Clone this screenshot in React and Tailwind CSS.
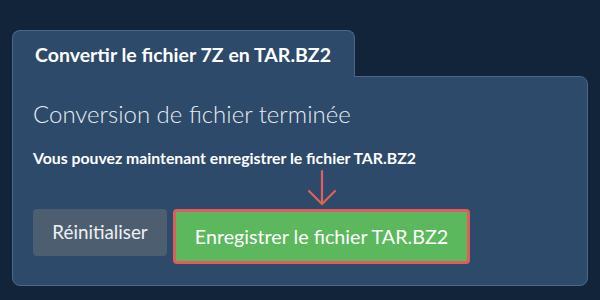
import React from "react";

export default function App() {
  return (
    <div
      className="w-[600px] h-[300px] bg-[#12243a] pt-[30px] pl-[12px] overflow-hidden"
      style={{ fontFamily: "Lato, 'Open Sans', sans-serif" }}
    >
      <div className="relative z-10 w-[343px] h-[47px] mb-[-1px] bg-[#2d4a6a] border border-b-0 border-[#4a6888] rounded-t-[8px] flex items-center pl-[22px]">
        <span className="text-white font-bold text-[19.5px] leading-none pt-[2px]">
          Convertir le fichier 7Z en TAR.BZ2
        </span>
      </div>
      <div className="w-[576px] h-[210px] bg-[#2d4a6a] border border-[#4a6888] rounded-b-[8px] rounded-tr-[8px] pl-[20px] pt-[22px]">
        <h1 className="text-[#e8edf2] font-light text-[24px] leading-[30px]">
          Conversion de fichier terminée
        </h1>
        <p className="mt-[18px] text-white font-bold text-[15.8px] leading-[22px]">
          Vous pouvez maintenant enregistrer le fichier TAR.BZ2
        </p>
        <div className="mt-[40px] flex items-start gap-[6px]">
          <button className="w-[134px] h-[47px] bg-[#4d5e70] rounded-[4px] text-[#eef1f4] text-[18.8px]">
            Réinitialiser
          </button>
          <div className="relative">
            <svg
              className="absolute left-1/2 -translate-x-1/2 bottom-full mb-[2px]"
              width="30"
              height="38"
              viewBox="0 0 30 38"
              fill="none"
              stroke="#e0605a"
              strokeWidth="2.2"
              strokeLinecap="round"
              strokeLinejoin="round"
            >
              <path d="M15 2 V35" />
              <path d="M2 22 L15 35 L28 22" />
            </svg>
            <button className="w-[297px] h-[55px] bg-[#5cb85c] border-[3px] border-[#e05d5d] rounded-[4px] text-white text-[19.7px]">
              Enregistrer le fichier TAR.BZ2
            </button>
          </div>
        </div>
      </div>
    </div>
  );
}
